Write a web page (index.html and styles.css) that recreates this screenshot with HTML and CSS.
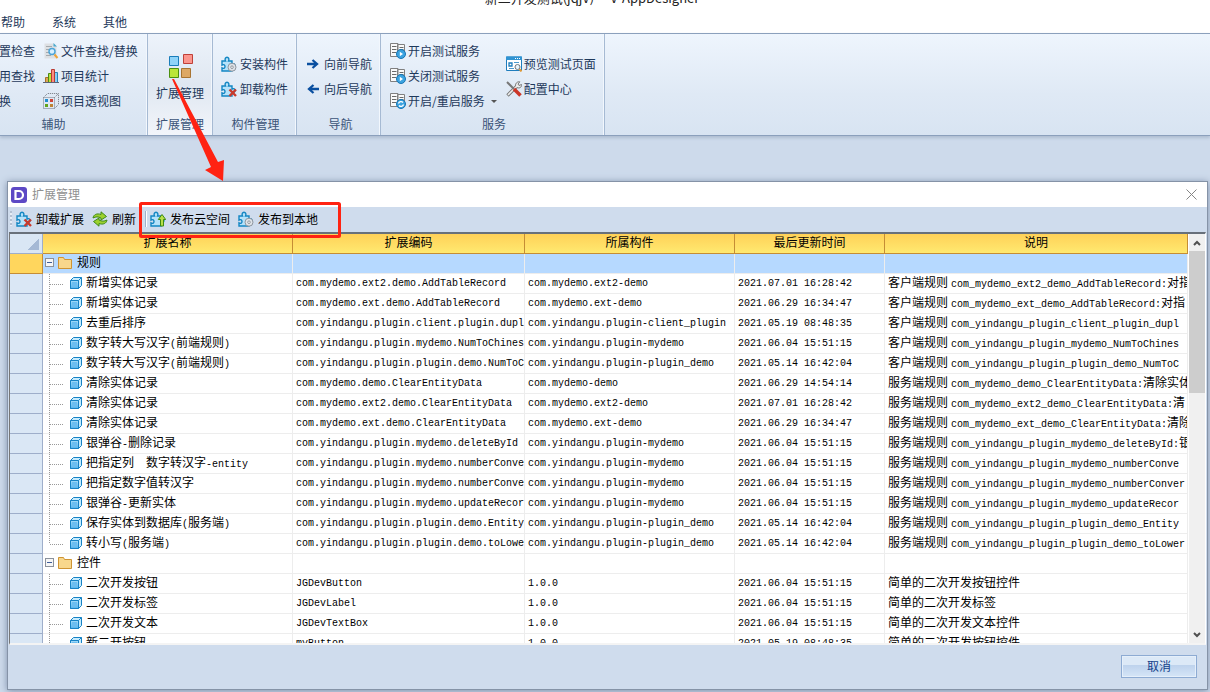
FILE: index.html
```html
<!DOCTYPE html>
<html lang="zh-CN">
<head>
<meta charset="utf-8">
<title>扩展管理</title>
<link rel="stylesheet" href="styles.css">
</head>
<body>
<svg class="defs" aria-hidden="true">
  <defs>
    <linearGradient id="gBlue" x1="0" y1="0" x2="0" y2="1"><stop offset="0" stop-color="#a5dcfa"/><stop offset="1" stop-color="#55b3ec"/></linearGradient>
    <symbol id="i-puzzle" viewBox="0 0 16 16"><path d="M1 5h3.500c-1-2 0-3.800 1.500-3.800S8.500 3 7.500 5H11v3c2-1 3 0 3 1.500s-1 2.500-3 1.500v4H1v-3c2 1 3 0 3-1.500S3 8 1 9z" fill="#b5e2fa" stroke="#1386c3" stroke-width="1.400"/></symbol>
    <symbol id="i-install" viewBox="0 0 16 16"><use href="#i-puzzle"/><circle cx="11" cy="11.200" r="4" fill="#dfe3e8" stroke="#8d959e"/><circle cx="11" cy="11.200" r="1.300" fill="#fff" stroke="#8d959e"/></symbol>
    <symbol id="i-uninstall" viewBox="0 0 16 16"><use href="#i-puzzle"/><path d="M8.500 8.500l6.500 6.500m0-6.500L8.500 15" stroke="#c93a2c" stroke-width="2.400"/></symbol>
    <symbol id="i-cloud" viewBox="0 0 16 16"><use href="#i-puzzle"/><path d="M12 3.500l3.700 5h-2.200V15h-3V8.500H8.300z" fill="#b7e04a" stroke="#3e8a12"/></symbol>
    <symbol id="i-refresh" viewBox="0 0 16 16"><path d="M1 7C1.500 3.500 5 2 9 3.500V.8l5.500 4.700L9 9V7C6 5.500 4 5.500 1 7z" fill="#9cd12e" stroke="#3f8a16"/><path d="M15 9c-.5 3.500-4 5-8 3.500v2.700l-5.500-4.700L7 7v2c3 1.500 5 1.500 8 0z" fill="#9cd12e" stroke="#3f8a16"/></symbol>
    <symbol id="i-server" viewBox="0 0 16 16"><path d="M7.500 1.500h7v12h-7zM.5.500h7.500v13H.5z" fill="#fafafa" stroke="#808080"/><path d="M2 3.500h4.500M2 6.500h4.500M2 9.500h4.500M9.500 4.500h4M9.500 6.500h4" stroke="#6a6a6a"/></symbol>
    <symbol id="i-play" viewBox="0 0 16 16"><use href="#i-server"/><circle cx="11" cy="11" r="4.500" fill="#3ba3e0" stroke="#1876b5"/><path d="M9.800 8.800v4.400l3.200-2.200z" fill="#fff"/></symbol>
    <symbol id="i-restart" viewBox="0 0 16 16"><use href="#i-server"/><circle cx="11" cy="11" r="4.500" fill="#3ba3e0" stroke="#1876b5"/><path d="M8.500 10.500a2.600 2.600 0 0 1 4.500-1m.5 2a2.600 2.600 0 0 1-4.500 1" fill="none" stroke="#fff" stroke-width="1.300"/></symbol>
    <symbol id="i-find" viewBox="0 0 16 16"><path d="M1.500.5h9l3 3v12h-12z" fill="#dde0e3"/><path d="M10.500 0v3.500H14z" fill="#4aa9cf"/><path d="M3 3.500h6M3 6.500h4M3 9.500h3M3 12.500h5" stroke="#a5a9ae"/><circle cx="9" cy="8.500" r="3" fill="#d8f0ff" stroke="#4ea5d8" stroke-width="1.500"/><path d="M11.500 11.500l3 3.500" stroke="#eda43a" stroke-width="2"/></symbol>
    <symbol id="i-stats" viewBox="0 0 16 16"><path d="M2.500 9.500h3v5h-3z" fill="#dca75a" stroke="#a9722b"/><path d="M11.500 4.500h3v10h-3z" fill="#83cff5" stroke="#2b82b8"/><path d="M5.500 5.500h3v9h-3z" fill="#b9e33a" stroke="#4c8a12"/><path d="M8.500 1.500h3v13h-3z" fill="#fa8d80" stroke="#b93b32"/><path d="M0 14.500h16" stroke="#5a6478"/></symbol>
    <symbol id="i-pivot" viewBox="0 0 16 16"><path d="M.5 4.500h11v11H.5zM.5 4.500l4-4h11v11l-4 4M11.500 4.500l4-4" fill="none" stroke="#70757c" stroke-dasharray="1 1"/><path d="M2 6h3v3H2z" fill="#218fd0"/><path d="M7 6h3v3H7z" fill="#cf4338"/><path d="M2 11h3v3H2z" fill="#62a51c"/><path d="M7 11h3v3H7z" fill="#bd8234"/></symbol>
    <symbol id="i-preview" viewBox="0 0 16 16"><path d="M.5 1h15v13.500H.5z" fill="#fff" stroke="#1f7dbd"/><path d="M0 .5h16v3.500H0z" fill="#2f93d2"/><path d="M9 2.500h5" stroke="#fff" stroke-dasharray="1 1"/><path d="M3 7h3v3H3z" fill="none" stroke="#1f7dbd" stroke-width="1.300"/><path d="M8 6.500h5M3 12.500h5" stroke="#4b9ace"/><circle cx="11.500" cy="11" r="2.500" fill="#e8f5fd" stroke="#71777d"/><path d="M13.500 13l2 2.500" stroke="#e29a34" stroke-width="2"/></symbol>
    <symbol id="i-tools" viewBox="0 0 16 16"><path d="M1.500 14.500L11 5" stroke="#777" stroke-width="3.400"/><path d="M10 6C8.500 3 11 .3 13.800.8L12 3l1 1.500 2.500-1C16 6.500 13 8 10 6z" fill="#eee" stroke="#777"/><path d="M2 14L11 5" stroke="#eee" stroke-width="1.600"/><path d="M1 1l7 7" stroke="#777" stroke-width="2"/><path d="M8 8l6.500 6.500" stroke="#cb3628" stroke-width="3.600"/></symbol>
    <symbol id="i-right" viewBox="0 0 12 12"><path d="M0 6h9M5.500 2l4.500 4-4.500 4" fill="none" stroke="#0a4fa0" stroke-width="2.300"/></symbol>
    <symbol id="i-left" viewBox="0 0 12 12"><path d="M12 6H3M6.500 2L2 6l4.500 4" fill="none" stroke="#0a4fa0" stroke-width="2.300"/></symbol>
    <symbol id="i-cube" viewBox="0 0 12 12"><path d="M.5 3.500l3-3h8v8l-3 3h-8z" fill="#c5ebfd" stroke="#1682c5"/><path d="M.5 3.500h8v8h-8z" fill="url(#gBlue)" stroke="#1682c5"/><path d="M8.500 3.500l3-3" stroke="#1682c5"/><path d="M2 5h5v5H2z" fill="#6bbdf0"/></symbol>
    <symbol id="i-folder" viewBox="0 0 14 12"><path d="M.5 11.500V.5h5l1 2h7v9z" fill="#f8d78c" stroke="#cf9433"/></symbol>
  </defs>
</svg>
<div class="app">
  <header>
    <div class="app-title">新二开发测试(jqjV)&nbsp; - &nbsp;V-AppDesigner</div>
    <nav class="menu">
      <button>帮助</button><button>系统</button><button>其他</button>
    </nav>
  </header>
  <div class="ribbon">
    <section class="group group-aux">
      <div class="group-body">
        <div class="stack bare"><button class="tool">置检查</button><button class="tool">用查找</button><button class="tool">换</button></div>
        <div class="stack">
          <button class="tool"><svg class="ico"><use href="#i-find"/></svg>文件查找/替换</button>
          <button class="tool"><svg class="ico"><use href="#i-stats"/></svg>项目统计</button>
          <button class="tool"><svg class="ico"><use href="#i-pivot"/></svg>项目透视图</button>
        </div>
      </div>
      <h2>辅助</h2>
    </section>
    <section class="group group-ext">
      <div class="group-body">
        <button class="big-tool">
          <svg class="ico-big" viewBox="0 0 24 24"><path d="M.5 2.500h9v9h-9z" fill="#8fd3f8" stroke="#1a7dba"/><path d="M14.500.5h9v9h-9z" fill="#fb958d" stroke="#bf4038"/><path d="M.5 14.500h9v9h-9z" fill="#bbe639" stroke="#4b9010"/><path d="M12.500 14.500h9v9h-9z" fill="#dda865" stroke="#a87432"/></svg>
          扩展管理
        </button>
      </div>
      <h2>扩展管理</h2>
    </section>
    <section class="group group-comp">
      <div class="group-body"><div class="stack">
        <button class="tool"><svg class="ico"><use href="#i-install"/></svg>安装构件</button>
        <button class="tool"><svg class="ico"><use href="#i-uninstall"/></svg>卸载构件</button>
      </div></div>
      <h2>构件管理</h2>
    </section>
    <section class="group group-nav">
      <div class="group-body"><div class="stack">
        <button class="tool"><svg class="ico-arrow"><use href="#i-right"/></svg>向前导航</button>
        <button class="tool"><svg class="ico-arrow"><use href="#i-left"/></svg>向后导航</button>
      </div></div>
      <h2>导航</h2>
    </section>
    <section class="group group-svc">
      <div class="group-body">
        <div class="stack">
          <button class="tool"><svg class="ico"><use href="#i-play"/></svg>开启测试服务</button>
          <button class="tool"><svg class="ico"><use href="#i-play"/></svg>关闭测试服务</button>
          <button class="tool"><svg class="ico"><use href="#i-restart"/></svg>开启/重启服务<span class="caret"></span></button>
        </div>
        <div class="stack">
          <button class="tool"><svg class="ico"><use href="#i-preview"/></svg>预览测试页面</button>
          <button class="tool"><svg class="ico"><use href="#i-tools"/></svg>配置中心</button>
        </div>
      </div>
      <h2>服务</h2>
    </section>
  </div>

  <main class="dialog" role="dialog" aria-labelledby="dlg-title">
    <div class="dlg-head">
      <span class="logo"><svg viewBox="0 0 16 16"><path d="M4.500 4H8a4 4 0 0 1 0 8H4.500z" fill="none" stroke="#fff" stroke-width="2.200"/></svg></span>
      <h1 id="dlg-title">扩展管理</h1>
      <button class="close" aria-label="关闭"><svg viewBox="0 0 11 11"><path d="M.5.5l10 10m0-10l-10 10" stroke="#858585"/></svg></button>
    </div>
    <div class="dlg-tools">
      <span class="grip"></span>
      <button><svg class="ico"><use href="#i-uninstall"/></svg>卸载扩展</button>
      <button><svg class="ico"><use href="#i-refresh"/></svg>刷新</button>
      <span class="sep"></span>
      <button><svg class="ico"><use href="#i-cloud"/></svg>发布云空间</button>
      <button><svg class="ico"><use href="#i-install"/></svg>发布到本地</button>
    </div>
    <div class="grid">
      <div class="grid-view">
        <table>
          <colgroup><col class="c-row"><col class="c-name"><col class="c-code"><col class="c-comp"><col class="c-time"><col></colgroup>
          <thead><tr><th class="corner"></th><th>扩展名称</th><th>扩展编码</th><th>所属构件</th><th>最后更新时间</th><th>说明</th></tr></thead>
          <tbody>
            <tr class="selected"><td></td><td class="parent"><button class="toggle" aria-label="折叠"></button><svg class="folder"><use href="#i-folder"/></svg>规则</td><td></td><td></td><td></td><td></td></tr>
            <tr><td></td><td class="leaf"><svg class="cube"><use href="#i-cube"/></svg>新增实体记录</td><td>com.mydemo.ext2.demo.AddTableRecord</td><td>com.mydemo.ext2-demo</td><td>2021.07.01 16:28:42</td><td><b>客户端规则</b>com_mydemo_ext2_demo_AddTableRecord:<b>对指</b></td></tr>
            <tr><td></td><td class="leaf"><svg class="cube"><use href="#i-cube"/></svg>新增实体记录</td><td>com.mydemo.ext.demo.AddTableRecord</td><td>com.mydemo.ext-demo</td><td>2021.06.29 16:34:47</td><td><b>客户端规则</b>com_mydemo_ext_demo_AddTableRecord:<b>对指</b></td></tr>
            <tr><td></td><td class="leaf"><svg class="cube"><use href="#i-cube"/></svg>去重后排序</td><td>com.yindangu.plugin.client.plugin.dupl</td><td>com.yindangu.plugin-client_plugin</td><td>2021.05.19 08:48:35</td><td><b>客户端规则</b>com_yindangu_plugin_client_plugin_dupl</td></tr>
            <tr><td></td><td class="leaf"><svg class="cube"><use href="#i-cube"/></svg>数字转大写汉字<i>(</i>前端规则<i>)</i></td><td>com.yindangu.plugin.mydemo.NumToChines</td><td>com.yindangu.plugin-mydemo</td><td>2021.06.04 15:51:15</td><td><b>客户端规则</b>com_yindangu_plugin_mydemo_NumToChines</td></tr>
            <tr><td></td><td class="leaf"><svg class="cube"><use href="#i-cube"/></svg>数字转大写汉字<i>(</i>前端规则<i>)</i></td><td>com.yindangu.plugin.plugin.demo.NumToC</td><td>com.yindangu.plugin-plugin_demo</td><td>2021.05.14 16:42:04</td><td><b>客户端规则</b>com_yindangu_plugin_plugin_demo_NumToC</td></tr>
            <tr><td></td><td class="leaf"><svg class="cube"><use href="#i-cube"/></svg>清除实体记录</td><td>com.mydemo.demo.ClearEntityData</td><td>com.mydemo-demo</td><td>2021.06.29 14:54:14</td><td><b>服务端规则</b>com_mydemo_demo_ClearEntityData:<b>清除实体</b></td></tr>
            <tr><td></td><td class="leaf"><svg class="cube"><use href="#i-cube"/></svg>清除实体记录</td><td>com.mydemo.ext2.demo.ClearEntityData</td><td>com.mydemo.ext2-demo</td><td>2021.07.01 16:28:42</td><td><b>服务端规则</b>com_mydemo_ext2_demo_ClearEntityData:<b>清</b></td></tr>
            <tr><td></td><td class="leaf"><svg class="cube"><use href="#i-cube"/></svg>清除实体记录</td><td>com.mydemo.ext.demo.ClearEntityData</td><td>com.mydemo.ext-demo</td><td>2021.06.29 16:34:47</td><td><b>服务端规则</b>com_mydemo_ext_demo_ClearEntityData:<b>清除</b></td></tr>
            <tr><td></td><td class="leaf"><svg class="cube"><use href="#i-cube"/></svg>银弹谷<i>-</i>删除记录</td><td>com.yindangu.plugin.mydemo.deleteById</td><td>com.yindangu.plugin-mydemo</td><td>2021.06.04 15:51:15</td><td><b>服务端规则</b>com_yindangu_plugin_mydemo_deleteById:<b>银</b></td></tr>
            <tr><td></td><td class="leaf"><svg class="cube"><use href="#i-cube"/></svg>把指定列&#12288;数字转汉字<i>-entity</i></td><td>com.yindangu.plugin.mydemo.numberConve</td><td>com.yindangu.plugin-mydemo</td><td>2021.06.04 15:51:15</td><td><b>服务端规则</b>com_yindangu_plugin_mydemo_numberConve</td></tr>
            <tr><td></td><td class="leaf"><svg class="cube"><use href="#i-cube"/></svg>把指定数字值转汉字</td><td>com.yindangu.plugin.mydemo.numberConve</td><td>com.yindangu.plugin-mydemo</td><td>2021.06.04 15:51:15</td><td><b>服务端规则</b>com_yindangu_plugin_mydemo_numberConver</td></tr>
            <tr><td></td><td class="leaf"><svg class="cube"><use href="#i-cube"/></svg>银弹谷<i>-</i>更新实体</td><td>com.yindangu.plugin.mydemo.updateRecor</td><td>com.yindangu.plugin-mydemo</td><td>2021.06.04 15:51:15</td><td><b>服务端规则</b>com_yindangu_plugin_mydemo_updateRecor</td></tr>
            <tr><td></td><td class="leaf"><svg class="cube"><use href="#i-cube"/></svg>保存实体到数据库<i>(</i>服务端<i>)</i></td><td>com.yindangu.plugin.plugin.demo.Entity</td><td>com.yindangu.plugin-plugin_demo</td><td>2021.05.14 16:42:04</td><td><b>服务端规则</b>com_yindangu_plugin_plugin_demo_Entity</td></tr>
            <tr><td></td><td class="leaf last"><svg class="cube"><use href="#i-cube"/></svg>转小写<i>(</i>服务端<i>)</i></td><td>com.yindangu.plugin.plugin.demo.toLowe</td><td>com.yindangu.plugin-plugin_demo</td><td>2021.05.14 16:42:04</td><td><b>服务端规则</b>com_yindangu_plugin_plugin_demo_toLower</td></tr>
            <tr><td></td><td class="parent"><button class="toggle" aria-label="折叠"></button><svg class="folder"><use href="#i-folder"/></svg>控件</td><td></td><td></td><td></td><td></td></tr>
            <tr><td></td><td class="leaf"><svg class="cube"><use href="#i-cube"/></svg>二次开发按钮</td><td>JGDevButton</td><td>1.0.0</td><td>2021.06.04 15:51:15</td><td><b>简单的二次开发按钮控件</b></td></tr>
            <tr><td></td><td class="leaf"><svg class="cube"><use href="#i-cube"/></svg>二次开发标签</td><td>JGDevLabel</td><td>1.0.0</td><td>2021.06.04 15:51:15</td><td><b>简单的二次开发标签</b></td></tr>
            <tr><td></td><td class="leaf"><svg class="cube"><use href="#i-cube"/></svg>二次开发文本</td><td>JGDevTextBox</td><td>1.0.0</td><td>2021.06.04 15:51:15</td><td><b>简单的二次开发文本控件</b></td></tr>
            <tr><td></td><td class="leaf"><svg class="cube"><use href="#i-cube"/></svg>新二开按钮</td><td>myButton</td><td>1.0.0</td><td>2021.05.19 08:48:35</td><td><b>简单的二次开发按钮控件</b></td></tr>
          </tbody>
        </table>
      </div>
      <div class="scrollbar">
        <button aria-label="向上"><svg viewBox="0 0 8 6"><path d="M1 5l3-3 3 3" fill="none" stroke="#505050" stroke-width="2"/></svg></button>
        <span class="thumb"></span>
        <button aria-label="向下"><svg viewBox="0 0 8 6"><path d="M1 1l3 3 3-3" fill="none" stroke="#505050" stroke-width="2"/></svg></button>
      </div>
    </div>
    <footer><button class="cancel">取消</button></footer>
  </main>
</div>
<svg class="marks" viewBox="0 0 210 160" aria-hidden="true">
  <rect x="9.500" y="124.500" width="199" height="33" rx="1" fill="none" stroke="#ff2312" stroke-width="3"/>
  <path d="M41 0h2l44 83 6-2-1 21-18-11 6-3z" fill="#ff2312"/>
</svg>
</body>
</html>
```
FILE: styles.css
```css
* { box-sizing: border-box; }
body {
  margin: 0;
  font: 12px/16px "Noto Sans CJK SC", sans-serif;
  color: #1e395b;
  background: #cddaeb;
}
button { margin: 0; padding: 0; border: 0; background: none; font: inherit; color: inherit; }
h1, h2 { margin: 0; font: inherit; }
svg { display: block; flex: none; }
.defs { position: absolute; width: 0; height: 0; }

.app { display: flex; flex-direction: column; height: 100vh; overflow: hidden; }
header { flex: none; background: #fff; }
.app-title { height: 12px; margin-top: -8px; padding-right: 26px; font-size: 13px; line-height: 12px; text-align: center; color: #222; }
.menu { display: flex; gap: 27px; height: 29px; padding: 0 1px 3px; align-items: flex-end; }

.ribbon {
  display: flex;
  flex: none;
  height: 103px;
  border-top: 1px solid #8ba0bc;
  border-bottom: 1px solid #8ba0bc;
  background: linear-gradient(#eef5fd, #dfe9f5 60%, #d8e4f2);
  box-shadow: 0 2px 3px #aebdd0;
}
.group { display: flex; flex-direction: column; padding-top: 3px; border-right: 1px solid #a6bad3; box-shadow: inset -1px 0 #f2f7fd; }
.group-body { display: flex; flex: 1; align-items: center; }
.group h2 { height: 20px; text-align: center; color: #3b5377; line-height: 18px; }
.stack { display: flex; flex-direction: column; gap: 1px; }
.tool { display: flex; align-items: center; gap: 2px; height: 24px; white-space: nowrap; }
.ico { width: 16px; height: 16px; }
.ico-arrow { width: 12px; height: 12px; margin-right: 2px; }
.group-aux { width: 188px; margin-left: -40px; }
.group-aux .group-body { padding-left: 39px; gap: 8px; }
.bare { width: 36px; }
.group-ext { width: 65px; background: linear-gradient(#edf3fb, #dfe7f1 50%, #f2f5fa); }
.group-ext .group-body { justify-content: center; }
.big-tool { display: flex; flex-direction: column; align-items: center; gap: 7px; padding-top: 3px; }
.ico-big { width: 24px; height: 24px; margin-left: 2px; }
.group-comp { width: 84px; padding-left: 8px; }
.group-comp .tool, .group-nav .tool { gap: 3px; }
.group-nav { width: 84px; padding-left: 10px; }
.group-svc { width: 224px; padding-left: 9px; }
.group-svc .group-body { gap: 9px; }
.group-comp h2, .group-nav h2, .group-svc h2 { padding-right: 6px; }
.caret { margin-left: 4px; border: 3px solid transparent; border-top-color: #555; border-bottom: 0; }

.dialog {
  display: flex;
  flex: 1;
  flex-direction: column;
  min-height: 0;
  margin: 45px 2px 2px 7px;
  border: 1px solid #8593a7;
  background: #cfdced;
  box-shadow: 0 1px 7px #7d8ea8;
}
.dlg-head { display: flex; flex: none; align-items: center; height: 25px; padding: 0 10px 0 3px; background: #fff; color: #909090; }
.dlg-head h1 { padding-bottom: 2px; }
.logo { width: 16px; height: 16px; margin-right: 5px; border-radius: 3px; background: #5d49c5; }
.close { margin-left: auto; }
.close svg { width: 11px; height: 11px; }
.dlg-tools { display: flex; flex: none; align-items: center; height: 25px; padding: 0 0 2px 2px; color: #000; }
.dlg-tools button { display: flex; align-items: center; gap: 4px; margin-right: 8px; }
.grip { width: 2px; height: 15px; margin-right: 4px; background: repeating-linear-gradient(#b4c0d2 0 2px, #e6edf6 2px 4px); }
.sep { width: 2px; height: 16px; margin: 0 3px 0 1px; background: linear-gradient(90deg, #9fb0c8 50%, #fff 50%); }

.grid { display: flex; flex: 1; min-height: 0; margin: 0 1px; border: 1px solid #777; border-right-color: #fff; border-bottom: 2px solid #f4f4f4; border-top: 2px solid #68707a; background: #fff; }
.grid-view { flex: 1; min-width: 0; overflow: hidden; }
table { width: 100%; table-layout: fixed; border-collapse: separate; border-spacing: 0; color: #000; }
.c-row { width: 33px; }
.c-name { width: 250px; }
.c-code { width: 232px; }
.c-comp { width: 210px; }
.c-time { width: 150px; }
th { height: 20px; padding: 0 0 3px; border-right: 1px solid #c58d35; border-bottom: 1px solid #c58d35; background: linear-gradient(#ffd158, #ffe970); font-weight: 400; }
th.corner { border-color: #9eaeca; background: linear-gradient(135deg, transparent 50%, #a5b9d5 50%) 18px 5px / 11px 11px no-repeat #d9e6f4; }
td { height: 20px; padding: 0 0 0 3px; overflow: hidden; border-right: 1px solid #ededed; border-bottom: 1px solid #ededed; font-family: "Liberation Mono", "Noto Sans CJK SC", monospace; font-size: 10px; line-height: 16px; white-space: nowrap; }
td:first-child { border-color: #9eaeca; background: #dae7f5; }
td:nth-child(2), td b { font: 12px/16px "Noto Sans CJK SC", sans-serif; }
td b { margin-right: 3px; }
td b + b { margin-right: 0; }
td i { font: 10px/1px "Liberation Mono", monospace; }
.selected td { background: #b6d9ff; }
.selected td:first-child { border-color: #c58d35; background: #ffd65d; }
td svg, .toggle { display: inline-block; vertical-align: -2px; }
.toggle { width: 9px; height: 9px; margin-right: 4px; border: 1px solid #8a919c; background: linear-gradient(#3d5c99, #3d5c99) center / 5px 1px no-repeat #f6f6f6; }
td .toggle { vertical-align: 1px; }
td.parent { padding: 0 0 3px 2px; }
.folder { width: 14px; height: 12px; margin-right: 5px; }
td.leaf {
  padding: 0 0 3px 27px;
  background:
    repeating-linear-gradient(90deg, #999 0 1px, transparent 1px 2px) 7px 10px / 13px 1px no-repeat,
    repeating-linear-gradient(#999 0 1px, transparent 1px 2px) 6px 0 / 1px 20px no-repeat;
}
td.last { background-size: 13px 1px, 1px 10px; }
.cube { width: 12px; height: 12px; margin-right: 4px; }

.scrollbar { display: flex; flex: none; flex-direction: column; width: 17px; border-left: 1px solid #fff; background: #f0f0f0; }
.scrollbar button { display: flex; align-items: center; justify-content: center; height: 17px; }
.scrollbar svg { width: 8px; height: 6px; }
.thumb { height: 142px; background: #cdcdcd; }
.scrollbar button:last-child { margin-top: auto; }

footer { display: flex; flex: none; justify-content: flex-end; height: 44px; padding: 10px 10px 0; }
.cancel { width: 76px; height: 23px; padding-bottom: 2px; border: 1px solid #8dabd3; box-shadow: inset 0 0 0 1px #e5effa; background: linear-gradient(#dce9f7 45%, #bed3ed 45%, #d5e5f7); color: #15428b; }

.marks { position: absolute; left: 131px; top: 79px; width: 210px; height: 160px; pointer-events: none; }
```
